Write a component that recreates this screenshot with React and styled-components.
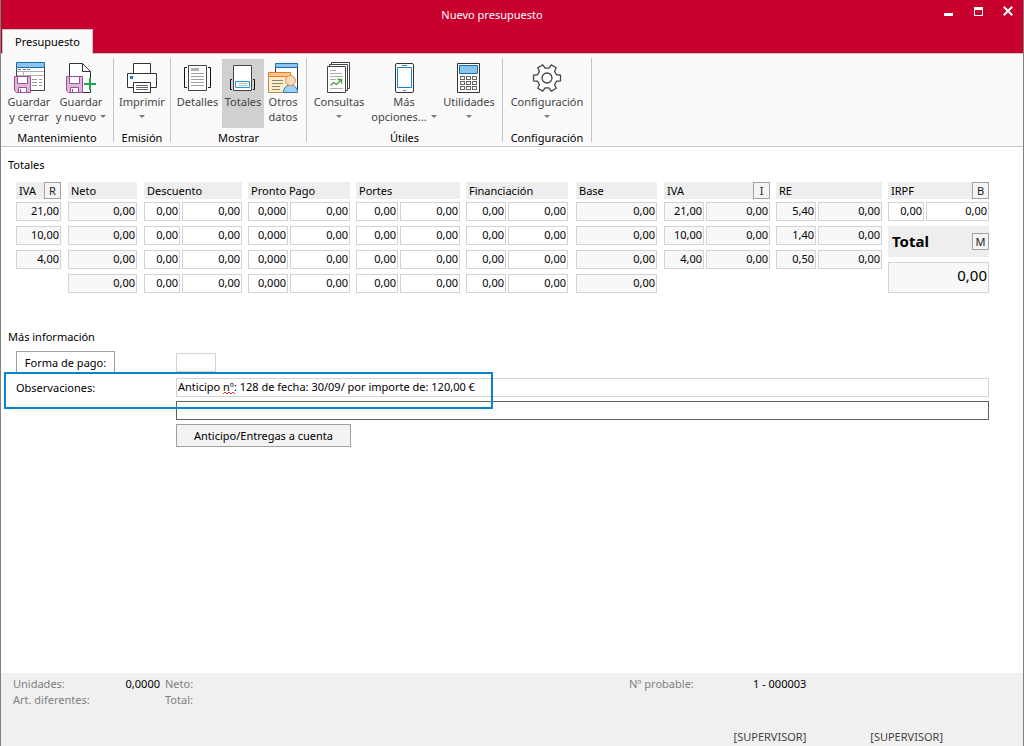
// import react
import React, { useState } from "react";
import styled, { createGlobalStyle, css } from "styled-components";

const GlobalStyle = createGlobalStyle`
  * {
    box-sizing: border-box;
  }
  body {
    margin: 0;
    background: #ffffff;
  }
  body, button, input {
    font-family: "Noto Sans", "Open Sans", sans-serif;
    font-size: 11px;
    line-height: 15px;
    color: #000000;
  }
`;

const Window = styled.div`
  display: flex;
  flex-direction: column;
  min-height: 100vh;
  border: solid #808080;
  border-width: 0 1px;
`;

/* title bar */

const TopBar = styled.header`
  background: #c8002d;
  border-bottom: 1px solid #c6c6c6;
`;

const TitleRow = styled.div`
  display: flex;
  height: 29px;
  padding-left: 50px;
`;

const Title = styled.h1`
  flex: 1;
  margin: 0;
  padding-top: 7px;
  font-size: 11px;
  font-weight: 400;
  text-align: center;
  color: #ffffff;
`;

const WindowButton = styled.button`
  width: 30px;
  height: 22px;
  padding: 0;
  border: 0;
  background: none;

  svg {
    display: block;
    margin: 0 auto;
  }
`;

const TabRow = styled.nav`
  display: flex;
  padding-left: 1px;
`;

const Tab = styled.button`
  height: 25px;
  margin-bottom: -1px;
  padding: 0 12px 2px;
  border: 1px solid #c6c6c6;
  border-bottom: 0;
  background: #fafafa;
`;

/* ribbon */

const Ribbon = styled.div`
  display: flex;
  padding: 4px 0;
  background: #fafafa;
  border-bottom: 1px solid #c6c6c6;
`;

const Group = styled.section`
  flex: none;
  width: ${({ $width }) => $width}px;
  height: 84px;
  border-right: 1px solid #c6c6c6;
`;

const GroupButtons = styled.div`
  display: flex;
  padding: 1px 2px 0;
`;

const GroupName = styled.h2`
  height: 14px;
  margin: 0;
  font-size: 11px;
  font-weight: 400;
  line-height: 20px;
  text-align: center;
`;

const RibbonButton = styled.button`
  display: flex;
  flex: none;
  flex-direction: column;
  align-items: center;
  width: ${({ $width }) => $width}px;
  height: 69px;
  padding: 3px 0 0;
  border: 0;
  background: ${({ $active }) => ($active ? "#d0d0d0" : "none")};
  color: #444444;
  white-space: nowrap;
`;

const Line = styled.span`
  display: flex;
  align-items: center;
  justify-content: center;
  gap: 4px;
  height: 15px;
`;

const Caret = styled.i`
  border: 3px solid transparent;
  border-top-color: #777777;
  border-bottom: 0;
`;

/* content */

const Content = styled.main`
  flex: 1;
  padding: 10px 34px 24px 7px;
`;

const SectionTitle = styled.h2`
  margin: 0;
  font-size: 11px;
  font-weight: 400;
`;

const TotalsGrid = styled.div`
  display: grid;
  grid-template-columns: 46fr 70fr 98fr 102fr 104fr 104fr 82fr 106fr 106fr 101fr;
  column-gap: 6px;
  align-items: start;
  margin: 10px 0 36px;
  padding-left: 8px;
`;

const Column = styled.section`
  display: flex;
  flex-direction: column;
  gap: 5px;
  min-width: 0;
  padding-right: ${({ $trim }) => $trim || 0}px;
`;

const ColumnHead = styled.div`
  display: flex;
  align-items: center;
  justify-content: space-between;
  height: 17px;
  margin-bottom: -2px;
  padding-left: 3px;
  background: #eeeeee;

  ${({ $large }) =>
    $large &&
    css`
      height: 31px;
      margin-bottom: 0;
      padding-left: 4px;
      font-size: 15px;
      font-weight: 700;
    `}
`;

const KeyButton = styled.button`
  width: 17px;
  height: 17px;
  padding: 0;
  border: 1px solid #a0a0a0;
  background: #f4f4f4;
  color: #222222;
  line-height: 13px;
`;

const Row = styled.div`
  display: grid;
  grid-template-columns: ${({ $split }) => $split.map((part) => `${part}fr`).join(" ")};
  column-gap: 2px;
`;

const Field = styled.input`
  min-width: 0;
  width: ${({ $width }) => ($width ? `${$width}px` : "100%")};
  height: 19px;
  padding: 0 1px 2px;
  border: 1px solid #d3d3d3;
  border-radius: 0;
  outline: 0;
  background: ${({ readOnly }) => (readOnly ? "#f8f8f8" : "#ffffff")};

  ${({ $number }) =>
    $number &&
    css`
      text-align: right;
    `}

  ${({ $strong }) =>
    $strong &&
    css`
      border-color: #606060;
    `}

  ${({ $large }) =>
    $large &&
    css`
      height: 31px;
      padding-bottom: 6px;
      font-size: 15px;
    `}
`;

const InfoGrid = styled.div`
  position: relative;
  display: grid;
  grid-template-columns: 160px minmax(0, 1fr);
  row-gap: 4px;
  align-items: center;
  justify-items: start;
  margin-top: 7px;
  padding-left: 8px;
`;

const PushButton = styled.button`
  grid-column: ${({ $column }) => $column};
  width: ${({ $width }) => $width}px;
  height: 23px;
  padding: 0;
  border: 1px solid #a0a0a0;
  background: ${({ $filled }) => ($filled ? "#f3f3f3" : "#ffffff")};
`;

const NotesBox = styled.div`
  position: relative;
  grid-column: 2;
  width: 100%;
  height: 19px;
`;

const Squiggle = styled.svg`
  position: absolute;
  left: 47px;
  top: 13px;
`;

const Highlight = styled.div`
  position: absolute;
  left: -4px;
  top: 21px;
  width: 489px;
  height: 37px;
  border: 2px solid #0a84cb;
  pointer-events: none;
`;

/* footer */

const Footer = styled.footer`
  display: flex;
  flex-direction: column;
  justify-content: space-between;
  height: 73px;
  padding: 3px 80px 2px 12px;
  background: #f0f0f0;
  color: #808080;
`;

const Summary = styled.dl`
  display: grid;
  grid-template-columns: 84px 58px 40px 1fr 119px 190px;
  column-gap: 5px;
  grid-auto-rows: 16px;
  margin: 0;

  dt,
  dd {
    margin: 0;
    line-height: 16px;
    white-space: nowrap;
  }
  dd {
    color: #000000;
  }
  dd:nth-of-type(1) {
    text-align: right;
  }
`;

const Users = styled.div`
  display: flex;
  justify-content: flex-end;
  gap: 64px;
  color: #444444;
`;

/* icons */

const Icon = ({ children }) => (
  <svg width="32" height="32" viewBox="0 0 32 32" fill="none" stroke="#444444" aria-hidden="true">
    {children}
  </svg>
);

const Floppy = () => (
  <g stroke="#9b4f96">
    <path d="M1.5 14.5h16v16h-14l-2-2z" fill="#dcb8dc" />
    <path d="M4.500 14.500h10v7h-10z" fill="#ffffff" />
    <path d="M5.500 25.500h8v5h-8z" fill="#ffffff" />
    <path d="M7.500 27v3" />
  </g>
);

const SaveCloseIcon = () => (
  <Icon>
    <path d="M3.500 5.500h28v23h-28z" fill="#ffffff" />
    <path d="M3.500 .5h28v5h-28z" fill="#8cc4ee" stroke="#1370b8" />
    <path d="M5 7.500h3M10 7.500h3M14 7.500h3" stroke="#777777" />
    <path d="M4 9.500h27M10.500 10v5M4 13.500h27" stroke="#b0b0b0" />
    <path d="M19 17.500h5M26 17.500h3M19 20.500h5M26 20.500h3M19 23.500h5M26 23.500h3" stroke="#999999" />
    <Floppy />
  </Icon>
);

const SaveNewIcon = () => (
  <Icon>
    <path d="M4.500 30V1.500h13l8 8v21h-8" fill="#ffffff" stroke="#333333" />
    <path d="M17.500 1.500v8h8" stroke="#333333" />
    <path d="M18 16h9v12h-9z" fill="#fafafa" stroke="none" />
    <Floppy />
    <path d="M25 16v12M19 22h12" stroke="#18a850" strokeWidth="2" />
  </Icon>
);

const PrintIcon = () => (
  <Icon>
    <g stroke="#333333">
      <path d="M7.500 11.500v-10h17v10" fill="#ffffff" />
      <path d="M1.500 11.500h29v14h-29z" fill="#ffffff" />
      <path d="M7.500 20.500h17v10h-17z" fill="#ffffff" />
      <path d="M10 23.500h12M10 25.500h12M10 27.500h12" stroke="#666666" />
    </g>
    <path d="M4 14h3v3h-3z" fill="#1e7fc8" stroke="none" />
  </Icon>
);

const DetailsIcon = () => (
  <Icon>
    <path d="M6.500 3.500h18v25h-18z" fill="#ffffff" />
    <path d="M5 5.500h-2.500v20h2.500M26 5.500h2.500v20h-2.500" stroke="#111111" />
    <path d="M9 6h8v3h-8z" fill="#b0b0b0" stroke="none" />
    <path d="M9 11.500h13M9 14.500h13M9 17.500h13M9 20.500h13M9 23.500h13" stroke="#a0a0a0" />
  </Icon>
);

const TotalsIcon = () => (
  <Icon>
    <path d="M6.500 3.500h18v25h-18z" fill="#ffffff" />
    <path d="M5 17.500h-1.500v10h1.500M26 17.500h1.500v10h-1.500" stroke="#111111" />
    <path d="M8.500 19.500h14v6h-14z" stroke="#1e9ad6" fill="#ffffff" />
    <path d="M11 21.500h9M11 23.500h9" stroke="#c0c0c0" />
  </Icon>
);

const OtherDataIcon = () => (
  <Icon>
    <path d="M8.500 5.500h22v22h-22z" fill="#ffffff" stroke="#333333" />
    <path d="M8.500 1.500h22v4h-22z" fill="#8cc4ee" stroke="#1370b8" />
    <path d="M1.500 14.500h22v16h-22z" fill="#fbeecb" stroke="#c08a4a" />
    <path d="M1.500 10.500h22v4h-22z" fill="#fcc68b" stroke="#e8782a" />
    <path d="M5 18.500h11M5 21.500h11M5 24.500h8M5 27.500h8" stroke="#8a8578" />
    <path d="M16.500 30.500c0-4.500 3-7.500 7-7.500s7 3 7 7.500z" fill="#a6d0f2" stroke="#2a7cc0" />
    <circle cx="23.500" cy="18.500" r="5" fill="#fbd9b8" stroke="#d59560" />
  </Icon>
);

const QueriesIcon = () => (
  <Icon>
    <path d="M8.500 .5h18v26h-18z" fill="#ffffff" />
    <path d="M6.500 2.500h18v26h-18z" fill="#ffffff" />
    <path d="M4.500 4.500h18v26h-18z" fill="#ffffff" />
    <path d="M7 8.500h6M7 11.500h12M7 14.500h13M7 17.500h6M7 26.500h13" stroke="#b0b0b0" />
    <path d="M7.500 23.500l3-3 3 2 5-5M14.500 17.500h4v4" stroke="#3da535" strokeWidth="1.3" />
  </Icon>
);

const PhoneIcon = () => (
  <Icon>
    <rect x="7.500" y="1.500" width="18" height="29" rx="1.500" fill="#ffffff" stroke="#333333" />
    <path d="M9.500 5.500h14v20h-14z" stroke="#1e82cc" />
    <path d="M14 3.500h5M15 28.500h3" stroke="#777777" />
  </Icon>
);

const CalculatorIcon = () => (
  <Icon>
    <path d="M4.500 1.500h22v29h-22z" fill="#ffffff" stroke="#333333" />
    <path d="M6.500 3.500h18v8h-18z" fill="#8cc4ee" stroke="#1370b8" />
    {[14.5, 19.5, 24.5].map((y) =>
      [7.5, 13.5, 19.5].map((x) => (
        <rect key={`${x}-${y}`} x={x} y={y} width="4" height="3" stroke="#666666" />
      ))
    )}
  </Icon>
);

// six teeth, the first one pointing right
const gearPath = () => {
  const point = (radius, degrees) => {
    const angle = (degrees * Math.PI) / 180;
    return `${16 + radius * Math.cos(angle)} ${16 + radius * Math.sin(angle)}`;
  };
  const points = [0, 60, 120, 180, 240, 300].flatMap((a) => [
    point(10, a - 19),
    point(13.8, a - 12),
    point(13.8, a + 12),
    point(10, a + 19),
  ]);
  return `M${points.join("L")}Z`;
};

const GearIcon = () => (
  <Icon>
    <path d={gearPath()} fill="#ffffff" strokeWidth="1.3" strokeLinejoin="round" />
    <circle cx="16" cy="16" r="5" strokeWidth="1.3" />
  </Icon>
);

/* data */

const GROUPS = [
  {
    name: "Mantenimiento",
    width: 113,
    buttons: [
      { icon: SaveCloseIcon, width: 52, lines: ["Guardar", "y cerrar"] },
      { icon: SaveNewIcon, width: 52, lines: ["Guardar", "y nuevo"], menu: true },
    ],
  },
  {
    name: "Emisión",
    width: 57,
    buttons: [{ icon: PrintIcon, width: 52, lines: ["Imprimir", ""], menu: true }],
  },
  {
    name: "Mostrar",
    width: 136,
    buttons: [
      { icon: DetailsIcon, width: 49, lines: ["Detalles"] },
      { icon: TotalsIcon, width: 42, lines: ["Totales"] },
      { icon: OtherDataIcon, width: 38, lines: ["Otros", "datos"] },
    ],
  },
  {
    name: "Útiles",
    width: 196,
    buttons: [
      { icon: QueriesIcon, width: 60, lines: ["Consultas", ""], menu: true },
      { icon: PhoneIcon, width: 70, lines: ["Más", "opciones..."], menu: true },
      { icon: CalculatorIcon, width: 60, lines: ["Utilidades", ""], menu: true },
    ],
  },
  {
    name: "Configuración",
    width: 89,
    buttons: [{ icon: GearIcon, width: 84, lines: ["Configuración", ""], menu: true }],
  },
];

const repeat = (row, times) => Array.from({ length: times }, () => row);

const COLUMNS = [
  { name: "IVA", hotkey: "R", trim: 1, locked: true, rows: [["21,00"], ["10,00"], ["4,00"]] },
  { name: "Neto", trim: 1, locked: true, rows: repeat(["0,00"], 4) },
  { name: "Descuento", split: [36, 60], rows: repeat(["0,00", "0,00"], 4) },
  { name: "Pronto Pago", split: [40, 60], rows: repeat(["0,000", "0,00"], 4) },
  { name: "Portes", split: [42, 60], rows: repeat(["0,00", "0,00"], 4) },
  { name: "Financiación", trim: 2, split: [40, 60], rows: repeat(["0,00", "0,00"], 4) },
  { name: "Base", trim: 1, locked: true, rows: repeat(["0,00"], 4) },
  {
    name: "IVA",
    hotkey: "I",
    locked: true,
    split: [40, 64],
    rows: [
      ["21,00", "0,00"],
      ["10,00", "0,00"],
      ["4,00", "0,00"],
    ],
  },
  {
    name: "RE",
    locked: true,
    split: [40, 64],
    rows: [
      ["5,40", "0,00"],
      ["1,40", "0,00"],
      ["0,50", "0,00"],
    ],
  },
  { name: "IRPF", hotkey: "B", split: [36, 63], rows: [["0,00", "0,00"]], total: true },
];

/* components */

const TotalsColumn = ({ name, hotkey, trim, locked, split = [1], rows, total }) => (
  <Column $trim={trim} aria-label={name}>
    <ColumnHead>
      {name}
      {hotkey && <KeyButton type="button">{hotkey}</KeyButton>}
    </ColumnHead>
    {rows.map((row, k) => (
      <Row key={k} $split={split}>
        {row.map((value, i) => (
          <Field
            key={i}
            $number
            aria-label={`${name} ${k + 1}.${i + 1}`}
            defaultValue={value}
            readOnly={locked}
          />
        ))}
      </Row>
    ))}
    {total && (
      <>
        <ColumnHead $large>
          <label htmlFor="total">Total</label>
          <KeyButton type="button">M</KeyButton>
        </ColumnHead>
        <Field id="total" $number $large readOnly value="0,00" />
      </>
    )}
  </Column>
);

const App = () => {
  const [view, setView] = useState("Totales");

  return (
    <>
      <GlobalStyle />
      <Window>
        <TopBar>
          <TitleRow>
            <Title>Nuevo presupuesto</Title>
            <WindowButton type="button" aria-label="Minimizar">
              <svg width="10" height="10" fill="#ffffff">
                <path d="M1 7h9v3h-9z" />
              </svg>
            </WindowButton>
            <WindowButton type="button" aria-label="Maximizar">
              <svg width="10" height="10" fill="#ffffff">
                <path d="M1 1h9v9h-9zM2 4v5h7v-5z" fillRule="evenodd" />
              </svg>
            </WindowButton>
            <WindowButton type="button" aria-label="Cerrar">
              <svg width="10" height="10" stroke="#ffffff" strokeWidth="2">
                <path d="M.7.7l8.600 8.600M9.300.7L.7 9.300" />
              </svg>
            </WindowButton>
          </TitleRow>
          <TabRow>
            <Tab type="button">Presupuesto</Tab>
          </TabRow>
        </TopBar>

        <Ribbon>
          {GROUPS.map(({ name, width, buttons }) => (
            <Group key={name} $width={width}>
              <GroupButtons>
                {buttons.map(({ icon: ButtonIcon, width: w, lines, menu }) => (
                  <RibbonButton
                    key={lines.join(" ")}
                    type="button"
                    $width={w}
                    $active={lines[0] === view}
                    onClick={() => name === "Mostrar" && setView(lines[0])}
                  >
                    <ButtonIcon />
                    {lines.map((line, k) => (
                      <Line key={k}>
                        {line}
                        {menu && k === 1 && <Caret />}
                      </Line>
                    ))}
                  </RibbonButton>
                ))}
              </GroupButtons>
              <GroupName>{name}</GroupName>
            </Group>
          ))}
        </Ribbon>

        <Content>
          <SectionTitle>Totales</SectionTitle>
          <TotalsGrid>
            {COLUMNS.map((column, k) => (
              <TotalsColumn key={k} {...column} />
            ))}
          </TotalsGrid>

          <SectionTitle>Más información</SectionTitle>
          <InfoGrid>
            <PushButton type="button" $column={1} $width={99}>
              Forma de pago:
            </PushButton>
            <Field $width={40} aria-label="Forma de pago" />
            <label htmlFor="notes">Observaciones:</label>
            <NotesBox>
              <Field
                id="notes"
                defaultValue="Anticipo nº: 128 de fecha: 30/09/ por importe de: 120,00 €"
              />
              <Squiggle width="13" height="4" fill="none" stroke="#e03030" aria-hidden="true">
                <path d="M0 3l2-2 2 2 2-2 2 2 2-2 2 2" />
              </Squiggle>
            </NotesBox>
            <NotesBox>
              <Field $strong aria-label="Observaciones, línea 2" />
            </NotesBox>
            <PushButton type="button" $column={2} $width={175} $filled>
              Anticipo/Entregas a cuenta
            </PushButton>
            <Highlight />
          </InfoGrid>
        </Content>

        <Footer>
          <Summary>
            <dt>Unidades:</dt>
            <dd>0,0000</dd>
            <dt>Neto:</dt>
            <dd />
            <dt>Nº probable:</dt>
            <dd>1 - 000003</dd>
            <dt>Art. diferentes:</dt>
            <dd />
            <dt>Total:</dt>
            <dd />
          </Summary>
          <Users>
            <span>[SUPERVISOR]</span>
            <span>[SUPERVISOR]</span>
          </Users>
        </Footer>
      </Window>
    </>
  );
};

export default App;
